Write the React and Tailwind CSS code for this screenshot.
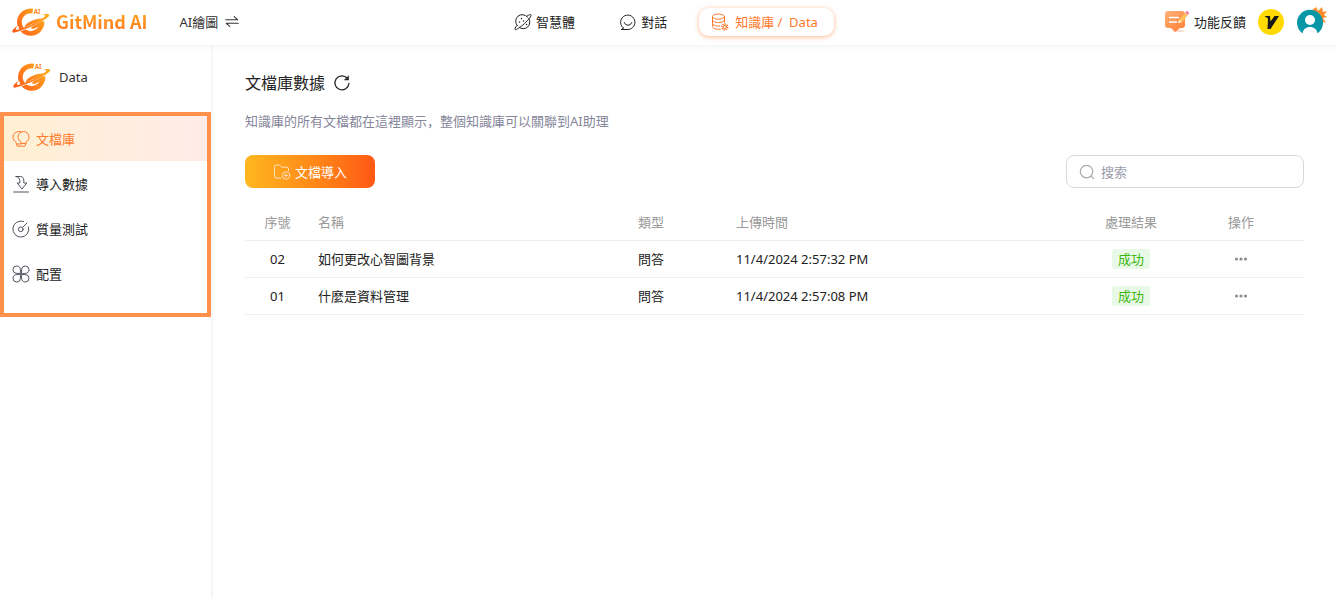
import React, { useState } from "react";

const documents = [
  { no: "02", name: "如何更改心智圖背景", type: "問答", time: "11/4/2024 2:57:32 PM", result: "成功" },
  { no: "01", name: "什麼是資料管理", type: "問答", time: "11/4/2024 2:57:08 PM", result: "成功" },
];

const Logo = ({ id }) => (
  <svg viewBox="36 24 114 84" className="h-7 w-[38px] shrink-0" fill="none" aria-hidden="true">
    <defs>
      <linearGradient id={id} x1="140" y1="30" x2="50" y2="100" gradientUnits="userSpaceOnUse">
        <stop stopColor="#ffb21e" />
        <stop offset="1" stopColor="#ff5f1a" />
      </linearGradient>
    </defs>
    {/* planet ring with the gap at the upper right */}
    <path d="M98 33A34 34 0 1 0 126 64" stroke={`url(#${id})`} strokeWidth="14" />
    <path d="M74 84c0-12 20-26 54-29-3 17-12 28-26 31-7 1-11-1-7-5l12-11c-13 2-22 8-33 14Z" fill={`url(#${id})`} />
    {/* orbit */}
    <path d="M56 81C44 89 42 95 48 95c20-3 70-29 88-41" stroke="#fff" strokeWidth="6" />
    <path d="M52 78c-14 9-19 18-12 20 18-1 92-32 107-50 4-7-8-8-23-4 9 0 14 1 11 5-13 14-70 40-85 41-4-1-2-6 2-12Z" fill={`url(#${id})`} />
    <text x="101" y="42" fontSize="19" fontWeight="700" fontFamily="Noto Sans, sans-serif" fill="#ff8a2a">AI</text>
  </svg>
);

const Icon = ({ children, className = "size-[18px]" }) => (
  <svg
    viewBox="0 0 18 18"
    className={`${className} shrink-0`}
    fill="none"
    stroke="currentColor"
    strokeWidth="1"
    strokeLinecap="round"
    strokeLinejoin="round"
    aria-hidden="true"
  >
    {children}
  </svg>
);

const PlanetIcon = () => (
  <Icon>
    <path d="M13.400 4A6.600 6.600 0 0 0 3.200 12.600M5 14.200A6.600 6.600 0 0 0 14.800 5.600" />
    <path d="M13 3.100c2-1.400 3.700-1.900 4-1.300.7 1-2.300 4.900-6.500 8.700S2 17.300 1.200 16.500c-.6-.6.1-2 1.400-3.700" />
    <path d="M7.500 5.500h.1M5.500 9h.1M9.500 8h.1M12.500 11.500h.1" strokeWidth="1.400" />
  </Icon>
);

const ChatIcon = () => (
  <Icon>
    <path d="M4.600 15.200A7.200 7.200 0 1 1 9 16.500H2.200c1-.3 1.600-.8 2-1.600" />
    <path d="M5.200 9.500a4 4 0 0 0 7.600 0" />
  </Icon>
);

const DatabaseIcon = () => (
  <Icon>
    <ellipse cx="7.500" cy="3.600" rx="6" ry="2.600" />
    <path d="M1.500 3.600v10c0 1.500 2.500 2.700 6 2.700h1.700M13.500 3.600v5.600M1.500 7c0 1.500 2.700 2.600 6 2.600s6-1.100 6-2.600M1.500 10.400c0 1.500 2.700 2.600 6 2.600h1.200" />
    <circle cx="13.800" cy="14" r="2.900" strokeWidth="1.500" strokeDasharray="1.300 .9" strokeLinecap="butt" />
    <circle cx="13.800" cy="14" r="1.700" />
  </Icon>
);

const BulbIcon = () => (
  <Icon>
    <path d="M9.200 13.500v-1.300C7.200 11 6 9.200 6 6.900 6 3.700 8.500 1.500 11.500 1.500S17 3.700 17 6.900c0 2.300-1.200 4.100-3 5.300v1.300" />
    <path d="M9.500 2C8.600 1.600 7.700 1.400 6.500 1.500 3.300 1.700 1 4 1 7c0 2.200 1.200 4 3 5.300l1.200 3.900h7.600l1.200-2.700H9.200M5 14h4.200" />
  </Icon>
);

const ImportIcon = () => (
  <Icon>
    <path d="M4 1.500h4.300c2.300 0 3.500 1.500 3.500 3.600v2.900h3L10 14 5.200 8h2.600V5.300C7.800 3.600 6.400 2.200 4 1.500Z" />
    <path d="M1.500 17h15" />
  </Icon>
);

const GaugeIcon = () => (
  <Icon>
    <path d="M11.500 1.500A8 8 0 1 0 16.600 7" />
    <circle cx="8.800" cy="9.300" r="2.400" />
    <path d="M10.500 7.500 15 3" />
  </Icon>
);

const PetalsIcon = () => (
  <Icon>
    <path d="M8.400 8.400H4.700a3.700 3.700 0 1 1 3.700-3.700ZM9.600 8.400V4.700a3.700 3.700 0 1 1 3.700 3.700ZM8.400 9.600v3.700a3.700 3.700 0 1 1-3.700-3.700ZM9.600 9.600h3.700a3.700 3.700 0 1 1-3.700 3.700Z" />
  </Icon>
);

const FeedbackIcon = () => (
  <svg viewBox="0 0 26 24" className="h-6 w-[26px]" fill="none" aria-hidden="true">
    <defs>
      <linearGradient id="feedback" x1="4" y1="2" x2="18" y2="22" gradientUnits="userSpaceOnUse">
        <stop stopColor="#ffad72" />
        <stop offset="1" stopColor="#ff7f35" />
      </linearGradient>
    </defs>
    <path d="M8 21q7-2 14 0-7 2-14 0Z" fill="#fbd8c4" />
    <path d="M4 1h14a3 3 0 0 1 3 3v11a3 3 0 0 1-3 3h-2l-5 4-4-4H4a3 3 0 0 1-3-3V4a3 3 0 0 1 3-3Z" fill="url(#feedback)" />
    <path d="M5 7.500h10M5 12h8" stroke="#fff" strokeWidth="1.700" />
    <path d="m15 10 6-7 3 2-6 7-4 1Z" fill="#ffc35b" />
    <path d="m21 3 1-1.500q1-1 2.400.2T24.700 4L24 5Z" fill="#ee83aa" />
    <path d="m15 10 3 2-4 1.300Z" fill="#fff0d8" />
  </svg>
);

const Avatar = () => (
  <svg viewBox="0 0 32 32" className="size-8" aria-hidden="true">
    <path d="m20 1 2 4 4-4 1 5 4-1-3 4 3 2-4 1 3 5-5-2-9-6-1-4Z" fill="#ff8b2b" />
    <path d="M6 27A13 13 0 1 1 22 27Z" fill="#0797a7" />
    <circle cx="14" cy="14" r="5" fill="#fff" />
    <path d="M6.500 28c.5-5 3.500-7 7.500-7s7 2 7.500 7Z" fill="#fff" />
  </svg>
);

const menu = [
  { label: "文檔庫", icon: BulbIcon },
  { label: "導入數據", icon: ImportIcon },
  { label: "質量測試", icon: GaugeIcon },
  { label: "配置", icon: PetalsIcon },
];

const Header = () => (
  <header className="relative z-10 flex h-[45px] items-center justify-between bg-white pr-2 pb-0.5 pl-3 shadow-[0_1px_6px_rgba(0,0,0,0.06)]">
    <div className="flex flex-1 items-center">
      <a href="#home" className="flex items-center gap-1.5">
        <Logo id="logo-header" />
        <span className="bg-linear-to-b from-[#ffae23] to-[#ff6a1d] bg-clip-text pb-0.5 font-['Noto_Sans_CJK_SC',sans-serif] text-[18px] leading-7 font-bold text-transparent">
          GitMind AI
        </span>
      </a>
      <button type="button" className="ml-8 flex items-center gap-1.5 text-[#333]">
        AI繪圖
        <Icon className="size-4">
          <path d="M2 6.500h13.500L11.500 3M16 10.500H2.500L6.500 14" strokeWidth="1.200" />
        </Icon>
      </button>
    </div>
    <nav className="ml-2 flex items-center text-[#222]">
      <a href="#agents" className="flex items-center gap-1">
        <PlanetIcon />
        智慧體
      </a>
      <a href="#chat" className="ml-11 flex items-center gap-1">
        <ChatIcon />
        對話
      </a>
      <a
        href="#knowledge"
        className="ml-8 flex h-7 items-center gap-1.5 rounded-[10px] px-3 pr-4 text-[#ff7a2d] shadow-[0_1px_5px_rgba(255,112,32,0.5)]"
      >
        <DatabaseIcon />
        <span>知識庫 /&nbsp; Data</span>
      </a>
    </nav>
    <div className="flex flex-1 items-center justify-end">
      <button type="button" className="flex items-center gap-1 text-[#222]">
        <FeedbackIcon />
        功能反饋
      </button>
      <button type="button" aria-label="VIP" className="ml-3 size-[26px] rounded-full bg-[#ffd900]">
        <svg viewBox="0 0 26 26" aria-hidden="true">
          <path d="M6.500 7H12l.5 5.500L16.500 7H21L12.500 20H9.500L10 9.500Z" fill="#161616" />
        </svg>
      </button>
      <button type="button" aria-label="帳戶" className="ml-3 size-8">
        <Avatar />
      </button>
    </div>
  </header>
);

const Sidebar = () => {
  const [active, setActive] = useState("文檔庫");

  return (
    <aside className="w-[213px] shrink-0 border-r-2 border-[#f6f6f6]">
      <div className="flex h-[67px] items-center gap-2 pb-1 pl-[13px] text-[#333]">
        <Logo id="logo-sidebar" />
        Data
      </div>
      <nav className="h-[205px] border-4 border-[#ff914d]">
        {menu.map(({ label, icon: MenuIcon }) => (
          <button
            key={label}
            type="button"
            onClick={() => setActive(label)}
            className={`flex h-[45px] w-full items-center gap-1.5 pl-2 ${
              active === label
                ? "bg-linear-to-r from-[#fff0d2] to-[#ffece8] text-[#ff7a2d]"
                : "text-[#222]"
            }`}
          >
            <span className={active === label ? "" : "text-[#50545f]"}>
              <MenuIcon />
            </span>
            {label}
          </button>
        ))}
      </nav>
    </aside>
  );
};

const DocumentTable = () => (
  <table className="mt-4 w-full table-fixed text-left text-[#222]">
    <colgroup>
      <col className="w-[65px]" />
      <col />
      <col className="w-[98px]" />
      <col className="w-[356px]" />
      <col className="w-[94px]" />
      <col className="w-[126px]" />
    </colgroup>
    <thead>
      <tr className="h-9 border-b border-[#eee] text-[#999]">
        <th className="text-center font-normal">序號</th>
        <th className="px-2 font-normal">名稱</th>
        <th className="px-2 font-normal">類型</th>
        <th className="px-2 font-normal">上傳時間</th>
        <th className="text-center font-normal">處理結果</th>
        <th className="text-center font-normal">操作</th>
      </tr>
    </thead>
    <tbody>
      {documents.map((doc) => (
        <tr key={doc.no} className="h-[37px] border-b border-[#eee]">
          <td className="text-center">{doc.no}</td>
          <td className="px-2">{doc.name}</td>
          <td className="px-2">{doc.type}</td>
          <td className="px-2">{doc.time}</td>
          <td>
            <div className="flex justify-center">
              <span className="rounded-[3px] bg-[#e9f9e7] px-1.5 text-[#3db80f]">{doc.result}</span>
            </div>
          </td>
          <td>
            <button type="button" aria-label="更多" className="mx-auto block text-[#8c8c8c]">
              <svg viewBox="0 0 14 4" className="h-1 w-3.5" fill="currentColor" aria-hidden="true">
                <circle cx="2.500" cy="2" r="1.600" />
                <circle cx="7" cy="2" r="1.600" />
                <circle cx="11.500" cy="2" r="1.600" />
              </svg>
            </button>
          </td>
        </tr>
      ))}
    </tbody>
  </table>
);

const App = () => (
  <div className="flex min-h-screen flex-col bg-white font-['Noto_Sans','Noto_Sans_CJK_SC',sans-serif] text-[13px] leading-5">
    <Header />
    <div className="flex flex-1">
      <Sidebar />
      <main className="min-w-0 flex-1 pt-[26px] pr-8 pl-8">
        <div className="flex items-center gap-2 text-[#222]">
          <h1 className="text-[16px] leading-6">文檔庫數據</h1>
          <button type="button" aria-label="重新整理">
            <Icon className="size-[18px]">
              <path d="M15.900 9.500A7 7 0 1 1 14.200 4.300" strokeWidth="1.300" />
              <path d="M15.600 2v4h-4Z" fill="currentColor" strokeWidth=".5" />
            </Icon>
          </button>
        </div>
        <p className="mt-4 text-[#85869a]">知識庫的所有文檔都在這裡顯示，整個知識庫可以關聯到AI助理</p>

        <div className="mt-6 flex items-center justify-between">
          <button
            type="button"
            className="flex h-[33px] w-[130px] items-center justify-center gap-1 rounded-lg bg-linear-to-r from-[#ffb71e] to-[#ff5714] text-white"
          >
            <span className="text-[#ffe1bd]">
              <Icon>
                <path d="M8 15H3a1.500 1.500 0 0 1-1.500-1.500v-10A1.500 1.500 0 0 1 3 2h3.500l2 2.200H14a1.500 1.500 0 0 1 1.500 1.500v2" />
                <circle cx="13" cy="12.500" r="3.700" />
                <path d="M13 11v3M11.500 12.500h3" />
              </Icon>
            </span>
            文檔導入
          </button>
          <label className="flex h-[33px] w-[238px] items-center gap-1.5 rounded-lg border border-[#d9d9d9] px-3 text-[#aaa]">
            <Icon className="size-4">
              <circle cx="8.500" cy="8.500" r="7" strokeWidth="1.400" />
              <path d="m13.700 13.700 2.800 2.800" strokeWidth="1.400" />
            </Icon>
            <input
              type="search"
              aria-label="搜索"
              placeholder="搜索"
              className="min-w-0 flex-1 text-[#222] outline-none placeholder:text-[#9a9cab]"
            />
          </label>
        </div>

        <DocumentTable />
      </main>
    </div>
  </div>
);

export default App;
